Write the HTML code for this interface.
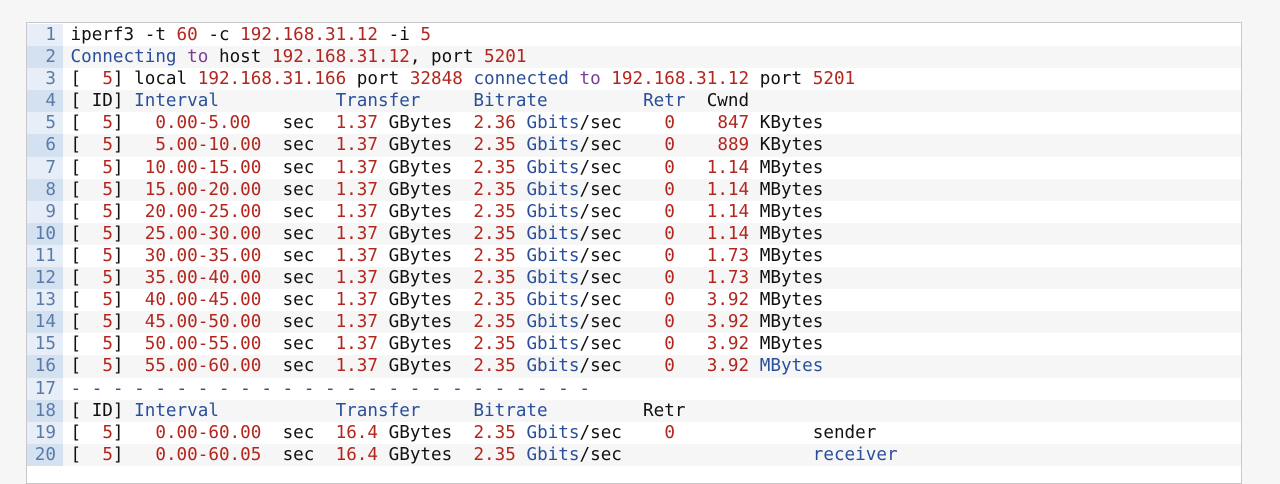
<!DOCTYPE html>
<html><head><meta charset="utf-8"><style>
html,body{margin:0;padding:0;background:#f6f6f6;width:1280px;height:452px;overflow:hidden}
.box{position:absolute;left:26px;top:22px;width:1214px;height:460px;background:#fff;border:1px solid #c8c8c8}
.l{height:22.1px;line-height:22.1px;white-space:pre;font-family:"DejaVu Sans Mono","Liberation Mono",monospace;font-size:17.62px;color:#111;position:relative;top:1px}
.l.e{background:#f6f6f6}
.g{display:inline-block;width:36px;padding-right:7px;box-sizing:border-box;text-align:right;background:#e7eef8;color:#5a7aa8;margin-right:7.5px}
.e .g{background:#d4e1f1}
.r{color:#b3261e}.b{color:#2a4f9a}.p{color:#7b3d98}
</style></head><body><div class="box">
<div class="l"><span class="g">1</span>iperf3 -t <span class="r">60</span> -c <span class="r">192.168.31.12</span> -i <span class="r">5</span></div>
<div class="l e"><span class="g">2</span><span class="b">Connecting</span> <span class="p">to</span> host <span class="r">192.168.31.12</span>, port <span class="r">5201</span></div>
<div class="l"><span class="g">3</span>[  <span class="r">5</span>] local <span class="r">192.168.31.166</span> port <span class="r">32848</span> <span class="b">connected</span> <span class="p">to</span> <span class="r">192.168.31.12</span> port <span class="r">5201</span></div>
<div class="l e"><span class="g">4</span>[ ID] <span class="b">Interval</span>           <span class="b">Transfer</span>     <span class="b">Bitrate</span>         <span class="b">Retr</span>  Cwnd</div>
<div class="l"><span class="g">5</span>[  <span class="r">5</span>]   <span class="r">0.00-5.00</span>   sec  <span class="r">1.37</span> GBytes  <span class="r">2.36</span> <span class="b">Gbits</span>/sec    <span class="r">0</span>    <span class="r">847</span> KBytes</div>
<div class="l e"><span class="g">6</span>[  <span class="r">5</span>]   <span class="r">5.00-10.00</span>  sec  <span class="r">1.37</span> GBytes  <span class="r">2.35</span> <span class="b">Gbits</span>/sec    <span class="r">0</span>    <span class="r">889</span> KBytes</div>
<div class="l"><span class="g">7</span>[  <span class="r">5</span>]  <span class="r">10.00-15.00</span>  sec  <span class="r">1.37</span> GBytes  <span class="r">2.35</span> <span class="b">Gbits</span>/sec    <span class="r">0</span>   <span class="r">1.14</span> MBytes</div>
<div class="l e"><span class="g">8</span>[  <span class="r">5</span>]  <span class="r">15.00-20.00</span>  sec  <span class="r">1.37</span> GBytes  <span class="r">2.35</span> <span class="b">Gbits</span>/sec    <span class="r">0</span>   <span class="r">1.14</span> MBytes</div>
<div class="l"><span class="g">9</span>[  <span class="r">5</span>]  <span class="r">20.00-25.00</span>  sec  <span class="r">1.37</span> GBytes  <span class="r">2.35</span> <span class="b">Gbits</span>/sec    <span class="r">0</span>   <span class="r">1.14</span> MBytes</div>
<div class="l e"><span class="g">10</span>[  <span class="r">5</span>]  <span class="r">25.00-30.00</span>  sec  <span class="r">1.37</span> GBytes  <span class="r">2.35</span> <span class="b">Gbits</span>/sec    <span class="r">0</span>   <span class="r">1.14</span> MBytes</div>
<div class="l"><span class="g">11</span>[  <span class="r">5</span>]  <span class="r">30.00-35.00</span>  sec  <span class="r">1.37</span> GBytes  <span class="r">2.35</span> <span class="b">Gbits</span>/sec    <span class="r">0</span>   <span class="r">1.73</span> MBytes</div>
<div class="l e"><span class="g">12</span>[  <span class="r">5</span>]  <span class="r">35.00-40.00</span>  sec  <span class="r">1.37</span> GBytes  <span class="r">2.35</span> <span class="b">Gbits</span>/sec    <span class="r">0</span>   <span class="r">1.73</span> MBytes</div>
<div class="l"><span class="g">13</span>[  <span class="r">5</span>]  <span class="r">40.00-45.00</span>  sec  <span class="r">1.37</span> GBytes  <span class="r">2.35</span> <span class="b">Gbits</span>/sec    <span class="r">0</span>   <span class="r">3.92</span> MBytes</div>
<div class="l e"><span class="g">14</span>[  <span class="r">5</span>]  <span class="r">45.00-50.00</span>  sec  <span class="r">1.37</span> GBytes  <span class="r">2.35</span> <span class="b">Gbits</span>/sec    <span class="r">0</span>   <span class="r">3.92</span> MBytes</div>
<div class="l"><span class="g">15</span>[  <span class="r">5</span>]  <span class="r">50.00-55.00</span>  sec  <span class="r">1.37</span> GBytes  <span class="r">2.35</span> <span class="b">Gbits</span>/sec    <span class="r">0</span>   <span class="r">3.92</span> MBytes</div>
<div class="l e"><span class="g">16</span>[  <span class="r">5</span>]  <span class="r">55.00-60.00</span>  sec  <span class="r">1.37</span> GBytes  <span class="r">2.35</span> <span class="b">Gbits</span>/sec    <span class="r">0</span>   <span class="r">3.92</span> <span class="b">MBytes</span></div>
<div class="l"><span class="g">17</span><span class="b">- - - - - - - - - - - - - - - - - - - - - - - - -</span></div>
<div class="l e"><span class="g">18</span>[ ID] <span class="b">Interval</span>           <span class="b">Transfer</span>     <span class="b">Bitrate</span>         Retr</div>
<div class="l"><span class="g">19</span>[  <span class="r">5</span>]   <span class="r">0.00-60.00</span>  sec  <span class="r">16.4</span> GBytes  <span class="r">2.35</span> <span class="b">Gbits</span>/sec    <span class="r">0</span>             sender</div>
<div class="l e"><span class="g">20</span>[  <span class="r">5</span>]   <span class="r">0.00-60.05</span>  sec  <span class="r">16.4</span> GBytes  <span class="r">2.35</span> <span class="b">Gbits</span>/sec                  <span class="b">receiver</span></div>
</div></body></html>
